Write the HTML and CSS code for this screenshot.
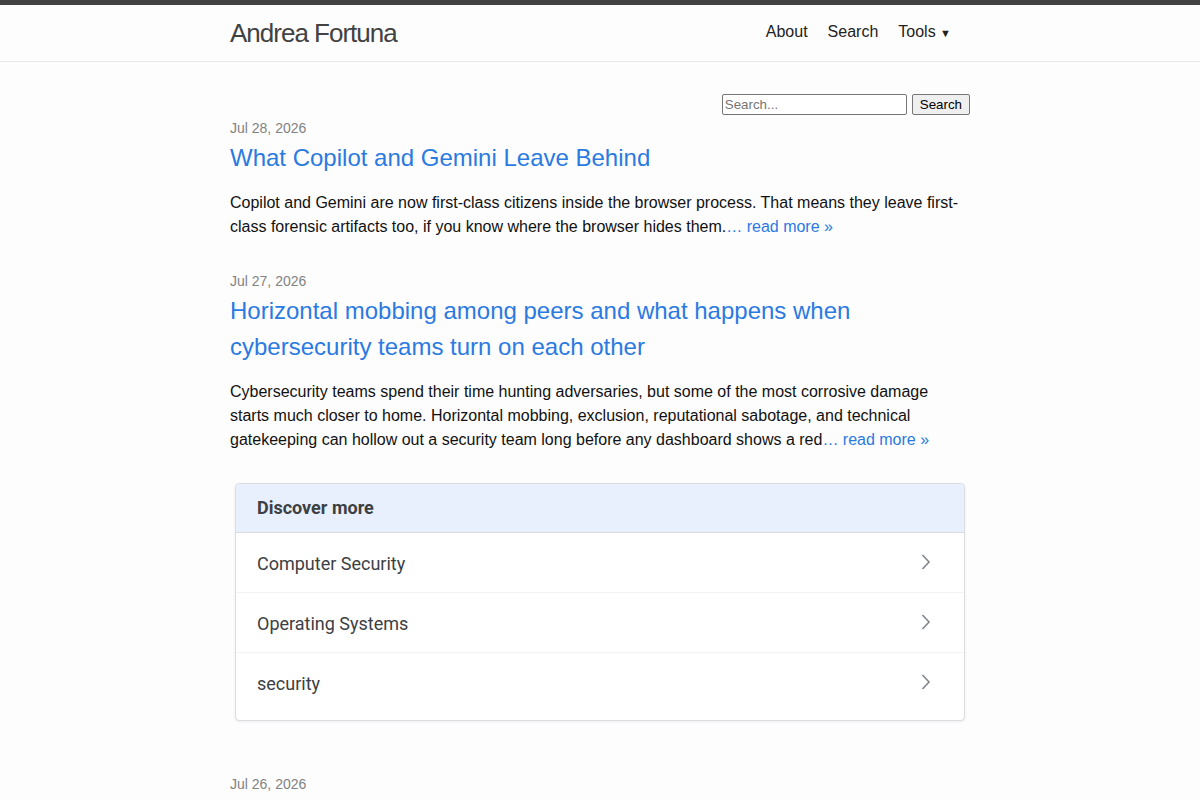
FILE: index.html
```html
<!DOCTYPE html>
<html lang="en">
<head>
    <meta charset="UTF-8">
    <meta name="viewport" content="width=device-width, initial-scale=1.0">
    <title>Andrea Fortuna</title>
    <link rel="stylesheet" href="styles.css">
</head>
<body>
    <header class="site-header">
        <div class="wrapper header-row">
            <a class="site-title" href="#">Andrea Fortuna</a>
            <nav class="site-nav">
                <a class="page-link" href="#">About</a>
                <a class="page-link" href="#">Search</a>
                <a class="page-link" href="#">Tools <span class="caret">&#9660;</span></a>
            </nav>
        </div>
    </header>

    <main class="page-content">
        <div class="wrapper">
            <form class="search-form">
                <input type="text" placeholder="Search...">
                <button type="button">Search</button>
            </form>

            <ul class="post-list">
                <li>
                    <span class="post-meta">Jul 28, 2026</span>
                    <h3><a class="post-link" href="#">What Copilot and Gemini Leave Behind</a></h3>
                    <p>Copilot and Gemini are now first-class citizens inside the browser process. That means they leave first-class forensic artifacts too, if you know where the browser hides them.<a href="#">&hellip; read more &raquo;</a></p>
                </li>
                <li>
                    <span class="post-meta">Jul 27, 2026</span>
                    <h3><a class="post-link" href="#">Horizontal mobbing among peers and what happens when cybersecurity teams turn on each other</a></h3>
                    <p>Cybersecurity teams spend their time hunting adversaries, but some of the most corrosive damage starts much closer to home. Horizontal mobbing, exclusion, reputational sabotage, and technical gatekeeping can hollow out a security team long before any dashboard shows a red<a href="#">&hellip; read more &raquo;</a></p>

                    <div class="discover">
                        <div class="discover-head">Discover more</div>
                        <a class="discover-item" href="#">
                            <span>Computer Security</span>
                            <svg class="chev" viewBox="0 0 12 18" width="12" height="18"><path d="M2.5 2 L9 9 L2.5 16" fill="none" stroke="#80868b" stroke-width="1.6"/></svg>
                        </a>
                        <a class="discover-item" href="#">
                            <span>Operating Systems</span>
                            <svg class="chev" viewBox="0 0 12 18" width="12" height="18"><path d="M2.5 2 L9 9 L2.5 16" fill="none" stroke="#80868b" stroke-width="1.6"/></svg>
                        </a>
                        <a class="discover-item" href="#">
                            <span>security</span>
                            <svg class="chev" viewBox="0 0 12 18" width="12" height="18"><path d="M2.5 2 L9 9 L2.5 16" fill="none" stroke="#80868b" stroke-width="1.6"/></svg>
                        </a>
                    </div>
                </li>
                <li>
                    <span class="post-meta">Jul 26, 2026</span>
                </li>
            </ul>
        </div>
    </main>
</body>
</html>
```

FILE: styles.css
```css
body {
    margin: 0;
    font-family: "Liberation Sans", Arial, sans-serif;
    font-size: 16px;
    line-height: 1.5;
    color: #111;
    background-color: #fdfdfd;
}
a {
    color: #2a7ae2;
    text-decoration: none;
}
.wrapper {
    max-width: 740px;
    margin: 0 auto;
    padding: 0 30px;
}
.site-header {
    border-top: 5px solid #424242;
    border-bottom: 1px solid #e8e8e8;
    min-height: 56px;
}
.header-row {
    display: flex;
    justify-content: space-between;
    align-items: center;
    height: 56px;
}
.site-title {
    font-size: 26px;
    font-weight: 300;
    letter-spacing: -1px;
    color: #424242;
    line-height: 54px;
}
.site-nav {
    display: flex;
    gap: 20px;
    margin-right: 19px;
    margin-top: -2px;
    line-height: 54px;
}
.page-link {
    color: #222;
}
.caret {
    font-size: 11px;
}
.page-content {
    padding-top: 30px;
}
.search-form {
    display: flex;
    justify-content: flex-end;
    gap: 5px;
    padding-top: 2px;
    height: 22px;
}
.search-form input {
    width: 185px;
    height: 21px;
    box-sizing: border-box;
    border: 1px solid #767676;
    border-radius: 2px;
    padding: 1px 2px;
    font-family: "Liberation Sans", Arial, sans-serif;
    font-size: 13.33px;
    background: #fff;
}
.search-form button {
    height: 21px;
    box-sizing: border-box;
    border: 1px solid #767676;
    border-radius: 2px;
    background: #efefef;
    padding: 0 7px;
    font-family: "Liberation Sans", Arial, sans-serif;
    font-size: 13.33px;
    color: #000;
}
.post-list {
    list-style: none;
    margin: 0;
    padding: 0;
}
.post-list li {
    margin-bottom: 30px;
}
.post-meta {
    display: block;
    font-size: 14px;
    color: #828282;
    line-height: 24px;
}
.post-list h3 {
    margin: 0 0 15px;
    font-size: 24px;
    font-weight: 400;
    line-height: 36px;
}
.post-list p {
    margin: 0 0 15px;
}
.discover {
    margin: 31px 5px 51px;
    border: 1px solid #dadce0;
    border-radius: 4px;
    background: #fff;
    box-shadow: 0 1px 3px rgba(60, 64, 67, 0.08);
    padding-bottom: 7px;
    font-family: Roboto, "Noto Sans", sans-serif;
    color: #3c4043;
}
.discover-head {
    background: #e8f0fe;
    border-bottom: 1px solid #dadce0;
    border-radius: 4px 4px 0 0;
    height: 48px;
    line-height: 48px;
    padding: 0 21px;
    font-size: 18px;
    font-weight: 700;
}
.discover-item {
    display: flex;
    justify-content: space-between;
    align-items: center;
    box-sizing: border-box;
    height: 60px;
    padding: 2px 32px 0 21px;
    border-bottom: 1px solid #f1f3f4;
    font-size: 18px;
    color: #3c4043;
}
.discover-item:last-child {
    border-bottom-color: transparent;
}
.chev {
    margin-top: -4px;
}
```
